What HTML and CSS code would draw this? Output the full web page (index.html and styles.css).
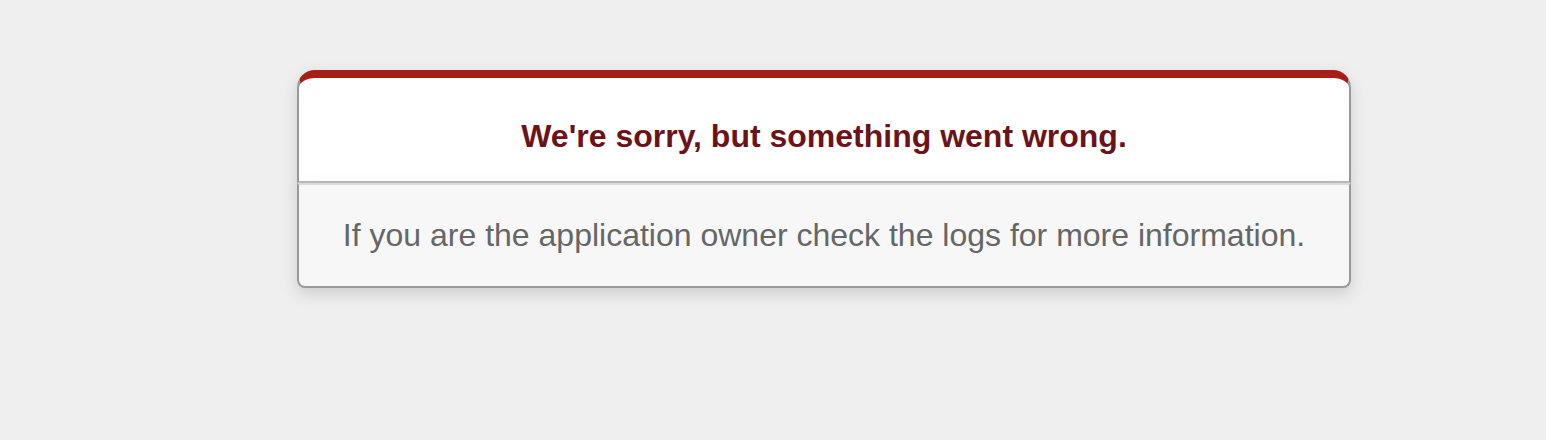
FILE: index.html
```html
<!DOCTYPE html>
<html lang="en">
  <head>
    <meta charset="utf-8">
    <title>We're sorry, but something went wrong (500)</title>
    <link rel="stylesheet" href="styles.css">
  </head>
  <body class="error-page">
    <div class="dialog">
      <div class="dialog-head">
        <h1>We're sorry, but something went wrong.</h1>
      </div>
      <p>If you are the application owner check the logs for more information.</p>
    </div>
  </body>
</html>
```

FILE: styles.css
```css
.error-page {
  background-color: #efefef;
  color: #2e2f30;
  text-align: center;
  font-family: "Liberation Sans", Arial, sans-serif;
  margin: 0;
  min-height: 440px;
}
.dialog {
  width: 1054px;
  margin: 70px 0 0 297px;
}
.dialog-head {
  border: 2px solid #ccc;
  border-right-color: #999;
  border-left-color: #999;
  border-bottom-color: #bbb;
  border-top: 8px solid #a61f17;
  border-top-left-radius: 18px;
  border-top-right-radius: 18px;
  background-color: white;
  padding: 14px 12% 0;
  box-shadow: 0 6px 16px rgba(50, 50, 50, 0.17);
}
.dialog-head h1 {
  font-size: 32px;
  color: #6b1317;
  line-height: 48px;
  margin: 0;
  padding: 20px 0 21px;
}
.dialog p {
  margin: 0 0 32px;
  padding: 32px 0 32px;
  font-size: 32px;
  line-height: 37px;
  background-color: #f7f7f7;
  border: 2px solid #ccc;
  border-right-color: #999;
  border-left-color: #999;
  border-bottom-color: #999;
  border-top-color: #dadada;
  border-bottom-left-radius: 8px;
  border-bottom-right-radius: 8px;
  color: #666;
  box-shadow: 0 6px 16px rgba(50, 50, 50, 0.17);
}
```
